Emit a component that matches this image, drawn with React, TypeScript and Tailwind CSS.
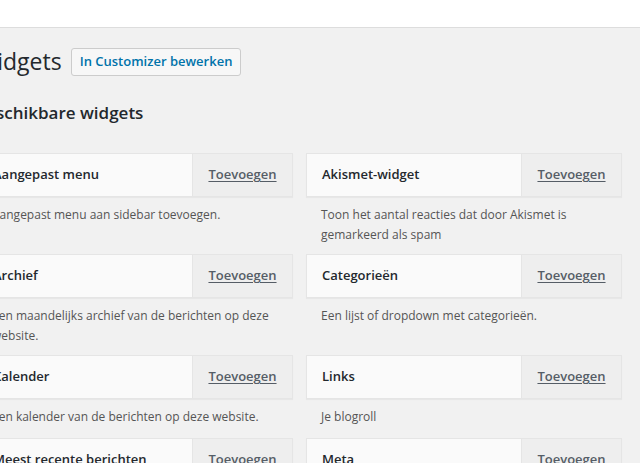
import React from 'react';

type Widget = { title: string; desc: string };

const widgets: Widget[] = [
  { title: 'Aangepast menu', desc: 'Aangepast menu aan sidebar toevoegen.' },
  { title: 'Akismet-widget', desc: 'Toon het aantal reacties dat door Akismet is gemarkeerd als spam' },
  { title: 'Archief', desc: 'Een maandelijks archief van de berichten op deze website.' },
  { title: 'Categorieën', desc: 'Een lijst of dropdown met categorieën.' },
  { title: 'Kalender', desc: 'Een kalender van de berichten op deze website.' },
  { title: 'Links', desc: 'Je blogroll' },
  { title: 'Meest recente berichten', desc: 'De meest recente berichten op je site.' },
  { title: 'Meta', desc: 'Inloggen, RSS- en WordPress.org-links.' },
];

const WidgetItem: React.FC<{ w: Widget }> = ({ w }) => (
  <div className="flex flex-col">
    <div className="flex h-[44px] border border-[#e5e5e5] bg-[#fafafa] shadow-[0_1px_1px_rgba(0,0,0,0.04)]">
      <div className="flex flex-1 items-center truncate pl-[15px] text-[13px] font-semibold text-[#23282d]">
        {w.title}
      </div>
      <div className="flex w-[100px] shrink-0 items-center justify-center border-l border-[#e5e5e5] bg-[#eeeeee]">
        <a className="text-[13px] font-semibold text-[#555d66] underline underline-offset-2">Toevoegen</a>
      </div>
    </div>
    <p className="mt-2 min-h-[22px] pl-[15px] pr-[14px] text-[12px] leading-5 text-[#555]">{w.desc}</p>
  </div>
);

export default function App() {
  return (
    <div className="h-[463px] w-[640px] overflow-hidden bg-[#f1f1f1] font-['Open_Sans',sans-serif]">
      <div className="h-[28px] border-b border-[#dddddd] bg-white" />
      <div className="ml-[-23px] mr-[18px]">
        <div className="mt-[19px] flex items-center gap-[9px]">
          <h1 className="ml-[-1px] text-[23px] leading-[29px] font-normal text-[#23282d]">Widgets</h1>
          <button className="h-[28px] rounded-[3px] border border-[#cccccc] bg-[#f7f7f7] px-[8px] text-[13px] font-semibold text-[#0073aa]">
            In Customizer bewerken
          </button>
        </div>
        <h2 className="mt-[25px] ml-[-2px] text-[17px] leading-[24px] font-semibold text-[#23282d]">
          Beschikbare widgets
        </h2>
        <div className="mt-[28px] grid grid-cols-2 gap-x-[13px] gap-y-[9px]">
          {widgets.map((w) => (
            <WidgetItem key={w.title} w={w} />
          ))}
        </div>
      </div>
    </div>
  );
}
